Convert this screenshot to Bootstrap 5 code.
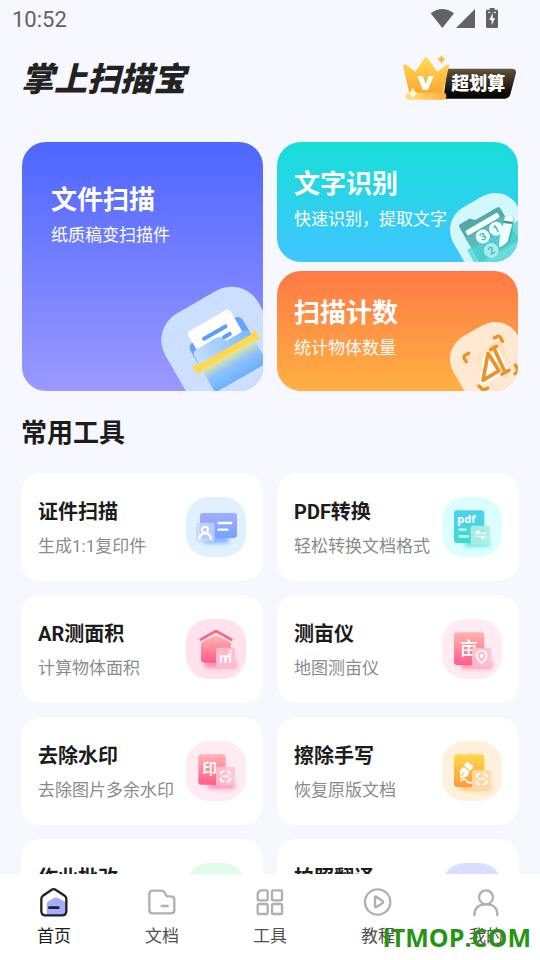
<!DOCTYPE html>
<html lang="zh-CN">
<head>
<meta charset="utf-8">
<meta name="viewport" content="width=device-width, initial-scale=1">
<title>掌上扫描宝</title>
<link href="https://cdn.jsdelivr.net/npm/bootstrap@5.3.0/dist/css/bootstrap.min.css" rel="stylesheet">
<style>
  body { font-family: Roboto, "Noto Sans CJK SC", sans-serif; background: #f7f7ff; color: #1c1c1c; }
  svg { display: block; flex: none; }
  .cjk { font-family: "Noto Sans CJK SC", sans-serif; }
  .app-status { height: 36px; padding: 0 41px 0 12px; font-size: 22px; color: #626266; }
  .app-time { padding-top: 3px; }
  .app-head { height: 106px; padding: 0 23px 24px 21px; }
  .app-logo { font-size: 33px; line-height: 40px; font-weight: 900; font-style: italic; color: #222; }
  .app-scroll { overflow-y: auto; scrollbar-width: none; min-height: 0; padding: 0 21px 20px; }
  .app-scroll::-webkit-scrollbar { display: none; }
  .tile-grid { display: grid; grid-template-columns: 1fr 1fr; gap: 14px; }
  .hero-grid { padding: 0 1px; }
  .hero { border-radius: 24px; overflow: hidden; color: #fff; padding: 22px 17px; min-height: 120px; }
  .hero:hover { color: #fff; }
  .hero-tall { padding: 38px 29px; }
  .hero-blue { background: linear-gradient(#4d66ff, #9b99ff); }
  .hero-cyan { background: linear-gradient(#18ded8, #40c5ff); }
  .hero-orange { background: linear-gradient(#ff7a45, #ffb043); }
  .hero-gap { gap: 9px; }
  .hero-title, .sec-title { font-size: 26px; line-height: 40px; font-weight: 700; margin: 0; }
  .hero-sub { font-size: 17px; line-height: 30px; }
  .hero-art { position: absolute; right: 0; bottom: 0; }
  .sec-title { margin: 22px 0 20px; }
  .tool { background: #fff; border-radius: 20px; padding: 22px 17px; color: #1c1c1c; min-height: 108px; }
  .tool-text { min-height: 64px; padding-top: 2px; }
  .tool-title { font-size: 20px; line-height: 30px; font-weight: 700; margin: 0 0 7px; }
  .tool-sub { font-size: 17px; line-height: 25px; color: #8b8b8b; }
  .app-tabs { background: #fff; height: 86px; padding-top: 13px; }
  .app-tab { font-size: 17px; line-height: 26px; color: #505050; gap: 5px; }
  .app-tab.active { color: #1c1c1c; }
  .site-stamp { position: absolute; right: 9px; bottom: 4px; font: 700 25px/38px "Open Sans", sans-serif; color: #279414; pointer-events: none; }
</style>
</head>
<body class="vh-100 d-flex flex-column overflow-hidden position-relative">
<header class="flex-shrink-0">
  <div class="app-status d-flex align-items-center justify-content-between">
    <span class="app-time">10:52</span>
    <svg width="69" height="22" viewBox="120 18 207 66" fill="#626266" aria-hidden="true">
      <path d="M122 37Q157 11 192 37L157 81Z"/><path d="M255 24V81H198Z"/>
      <path d="M299 21h15v5h6q4 0 4 4v47q0 4-4 4h-28q-4 0-4-4V30q0-4 4-4h7Z"/>
      <path d="M308 35 298 57h7v16l10-22h-7Z" fill="#fff"/><path d="M294 34h7M311 34h7" stroke="#fff" stroke-width="3"/>
    </svg>
  </div>
  <div class="app-head d-flex align-items-center justify-content-between">
    <h1 class="app-logo cjk m-0">掌上扫描宝</h1>
    <a href="#vip" aria-label="超划算">
      <svg width="115" height="48" viewBox="36 160 345 144">
        <defs>
          <linearGradient id="gk" x1="0" y1="0" x2="0" y2="1"><stop stop-color="#62543a"/><stop offset=".85" stop-color="#080704"/></linearGradient>
          <linearGradient id="gc" x1="0" y1="0" x2="0" y2="1"><stop stop-color="#ffdc55"/><stop offset="1" stop-color="#ffa72f"/></linearGradient>
          <linearGradient id="gb"><stop stop-color="#ffe07a"/><stop offset=".5" stop-color="#ffc860"/><stop offset="1" stop-color="#ffad3b"/></linearGradient>
        </defs>
        <path d="M172 207H364Q382 207 377 224L361 284Q357 297 342 297H160Z" fill="url(#gk)"/>
        <path d="M42 195q5-2 10 2l24 19 27-40q5-7 10 0l29 40 28-20q10-4 7 4l-19 80H58L39 200q0-4 3-5Z" fill="url(#gc)"/>
        <rect x="47" y="279" width="122" height="21" rx="10" fill="url(#gb)"/>
        <path d="M82 229h16l9 24 9-24h15l-17 41h-16Z" fill="#fff"/>
        <path d="M154 165q3 11 13 14-10 3-13 13-3-10-13-13 10-3 13-14Z" fill="#ffb640"/>
        <path d="M68 263q4 14 16 18-12 4-16 17-4-13-16-17 12-4 16-18Z" fill="#fff7d8"/>
        <text class="cjk" x="184" y="271" font-size="54" font-weight="900" fill="#fff">超划算</text>
      </svg>
    </a>
  </div>
</header>

<main class="app-scroll flex-grow-1">
  <div class="tile-grid hero-grid">
    <a href="#scan" class="hero hero-tall hero-blue position-relative text-decoration-none">
      <svg class="hero-art" width="113" height="121" viewBox="0 0 339 363" aria-hidden="true">
        <defs>
          <linearGradient id="s1" x1="0" y1="0" x2="0" y2="1"><stop stop-color="#ffe271"/><stop offset=".12" stop-color="#dfe4a0"/><stop offset=".48" stop-color="#8dc2ff"/><stop offset="1" stop-color="#6bb0ff"/></linearGradient>
          <linearGradient id="s2"><stop stop-color="#c4e0ff"/><stop offset="1" stop-color="#7db8ff"/></linearGradient>
        </defs>
        <rect x="59" y="75" width="321" height="321" rx="92" transform="rotate(-30 219.500 235.500)" fill="#cddfff"/>
        <g transform="rotate(-30 225 245)">
          <rect x="137" y="172" width="182" height="74" rx="18" fill="#65a3ff"/>
          <rect x="154" y="138" width="146" height="108" rx="12" fill="#fff"/>
          <path d="M190 180h74M244 206h20" stroke="#5a9cff" stroke-width="12" stroke-linecap="round"/>
          <path d="M139 262v-50q0-16 16-16h68q9 0 14 8l8 15h60q14 0 14 14v29Z" fill="url(#s2)"/>
          <path d="M138 250h181v74q0 13-13 13H151q-13 0-13-13Z" fill="url(#s1)"/>
          <path d="M120 236h14v5h187v-5h14v25h-14v-5H134v5h-14Z" fill="#ffd94a" stroke="#ffd94a" stroke-width="3" stroke-linejoin="round"/>
        </g>
      </svg>
      <div class="position-relative text-nowrap"><h2 class="hero-title">文件扫描</h2><div class="hero-sub">纸质稿变扫描件</div></div>
    </a>
    <div class="d-flex flex-column hero-gap">
      <a href="#ocr" class="hero hero-cyan position-relative text-decoration-none">
        <svg class="hero-art" width="88" height="82" viewBox="0 0 264 246" aria-hidden="true">
          <rect x="72" y="51" width="222" height="222" rx="78" transform="rotate(-30 183 162)" fill="#d2f8fb"/>
          <g transform="rotate(-30 180 165)">
            <path d="M112 98q0-6 6-6h34l12 12h76q7 0 7 7v50H112Z" fill="#55a9a8"/>
            <rect x="121" y="117" width="112" height="17" rx="5" fill="#f4ffff"/>
            <path d="M112 137h136v76q0 10-10 10H122q-10 0-10-10Z" fill="#5db9b8"/>
            <path d="M98 170h180v95H98Z" fill="#3ecfd0" opacity=".72"/>
            <path d="M98 180h180M98 190h180M98 200h180M98 210h180M98 220h180M98 230h180M108 170v70M118 170v70M128 170v70M138 170v70M148 170v70M158 170v70M168 170v70M178 170v70M188 170v70M198 170v70M208 170v70M218 170v70M228 170v70M238 170v70" stroke="#7be5e3" stroke-width="2" opacity=".5"/>
            <circle cx="159" cy="158" r="21" fill="#eaffff"/><circle cx="205" cy="158" r="21" fill="#eaffff"/><circle cx="160" cy="207" r="22" fill="#a6efee"/>
            <g font-size="32" font-weight="700" text-anchor="middle" fill="#55b5b5"><text x="159" y="169">3</text><text x="205" y="169">1</text><text x="160" y="218">2</text></g>
          </g>
          <path d="M226 119q2-14 16-12 12 2 10 16l-13 62-25 20q-6 1-6-6l4-20Z" fill="#2e8f8e" opacity=".55"/>
          <path d="M223 116q2-11 15-10 13 1 12 14l-2 8-26-4ZM221 129l26 4-14 53-19 15q-6 2-7-4l2-24Z" fill="#effffe"/>
          <path d="m222 122 27 4-1 5-28-4Z" fill="#438e8c"/>
        </svg>
        <div class="position-relative text-nowrap"><h2 class="hero-title">文字识别</h2><div class="hero-sub">快速识别，提取文字</div></div>
      </a>
      <a href="#count" class="hero hero-orange position-relative text-decoration-none">
        <svg class="hero-art" width="88" height="81" viewBox="0 0 264 243" fill="none" aria-hidden="true">
          <defs><linearGradient id="o1" x1="0" y1="0" x2="0" y2="1"><stop stop-color="#ffdcb8"/><stop offset="1" stop-color="#ffe9d2" stop-opacity="0"/></linearGradient></defs>
          <rect x="72" y="48" width="222" height="222" rx="78" transform="rotate(-30 183 159)" fill="#ffe9d2"/>
          <path d="M110 148 208 92l44 76-98 56Z" fill="url(#o1)"/>
          <path d="M109 155q-12-15-4-19l11-6M193 84l9-5q8-4 15 15M264 186l-9 5M256 165q10 15 4 21M147 228l12 12 14-5" stroke="#eb9324" stroke-width="10" stroke-linecap="round" stroke-linejoin="round"/>
          <path d="M174 134 159 213 211 182ZM193 114l31 71" stroke="#fff" stroke-width="22" stroke-linejoin="round"/>
          <path d="M174 130 159 211 207 182ZM182 119l17-10M192 115l33 72M216 192l21-11" stroke="#eb9324" stroke-width="11" stroke-linejoin="round" stroke-linecap="round"/>
          <path d="M176 152 171 193 192 179Z" fill="#fff"/>
        </svg>
        <div class="position-relative text-nowrap"><h2 class="hero-title">扫描计数</h2><div class="hero-sub">统计物体数量</div></div>
      </a>
    </div>
  </div>

  <h2 class="sec-title">常用工具</h2>

  <svg width="0" height="0" class="position-absolute" aria-hidden="true">
    <defs>
      <linearGradient id="t1" x1="0" y1="0" x2="0" y2="1"><stop stop-color="#a2adff"/><stop offset="1" stop-color="#75a3ff"/></linearGradient>
      <linearGradient id="t2" x1="0" y1="0" x2="0" y2="1"><stop stop-color="#4fd0f2"/><stop offset="1" stop-color="#3ddcc9"/></linearGradient>
      <linearGradient id="t3" x1="0" y1="0" x2="0" y2="1"><stop stop-color="#ffb4b0"/><stop offset="1" stop-color="#ff5c8a"/></linearGradient>
      <linearGradient id="t4" x1="0" y1="0" x2="0" y2="1"><stop stop-color="#ffd84e"/><stop offset="1" stop-color="#ff9a3a"/></linearGradient>
      <filter id="soft" x="-50%" y="-100%" width="200%" height="300%"><feGaussianBlur stdDeviation="6"/></filter>
    </defs>
  </svg>

  <div class="tile-grid">
    <a href="#id" class="tool d-flex justify-content-between align-items-center text-decoration-none">
      <div class="tool-text text-nowrap"><h3 class="tool-title">证件扫描</h3><div class="tool-sub">生成1:1复印件</div></div>
      <svg width="60" height="60" viewBox="48 51 180 180" aria-hidden="true">
        <rect x="48" y="51" width="180" height="180" rx="68" fill="#e0f0ff"/>
        <rect x="100" y="160" width="76" height="30" fill="#6fa5ff" opacity=".8" filter="url(#soft)"/>
        <rect x="90" y="99" width="111" height="75" rx="9" fill="url(#t1)"/>
        <rect x="78" y="128" width="56" height="57" rx="7" fill="#c5d5ff" opacity=".8"/>
        <g fill="none" stroke="#fff" stroke-linecap="round"><path d="M146 129h38M146 149h26" stroke-width="7"/><circle cx="105" cy="149" r="9" stroke-width="6"/><path d="M88 176q1-16 17-16t18 16" stroke-width="7"/></g>
      </svg>
    </a>
    <a href="#pdf" class="tool d-flex justify-content-between align-items-center text-decoration-none">
      <div class="tool-text text-nowrap"><h3 class="tool-title">PDF转换</h3><div class="tool-sub">轻松转换文档格式</div></div>
      <svg width="60" height="60" viewBox="36 51 180 180" aria-hidden="true">
        <rect x="36" y="51" width="180" height="180" rx="68" fill="#dcfeff"/>
        <rect x="104" y="180" width="74" height="20" fill="#3de0d0" opacity=".75" filter="url(#soft)"/>
        <rect x="72" y="91" width="91" height="98" rx="9" fill="url(#t2)"/>
        <text x="82" y="130" font-family="Noto Sans" font-weight="700" font-size="33" fill="#fff">pdf</text>
        <path d="M89 149h17M89 169h25" stroke="#b9f5f3" stroke-width="8" stroke-linecap="round"/>
        <rect x="122" y="137" width="58" height="57" rx="8" fill="#aeeee8" opacity=".92"/>
        <path d="M135 160h32M137 160l9-8v8M135 169h32M165 169l-9 9v-9" fill="#fff" stroke="#fff" stroke-width="4" stroke-linejoin="round"/>
      </svg>
    </a>
    <a href="#ar" class="tool d-flex justify-content-between align-items-center text-decoration-none">
      <div class="tool-text text-nowrap"><h3 class="tool-title">AR测面积</h3><div class="tool-sub">计算物体面积</div></div>
      <svg width="60" height="60" viewBox="48 27 180 180" aria-hidden="true">
        <rect x="48" y="27" width="180" height="180" rx="68" fill="#ffe2ee"/>
        <rect x="104" y="150" width="94" height="24" fill="#ff6b90" opacity=".7" filter="url(#soft)"/>
        <path d="M92 89 138 63 184 89" fill="none" stroke="#fa648b" stroke-width="8" stroke-linecap="round" stroke-linejoin="round"/>
        <path d="M93 104q0-6 5-9l34-17q6-3 12 0l34 17q5 3 5 9v44q0 10-10 10H103q-10 0-10-10Z" fill="url(#t3)"/>
        <rect x="138" y="113" width="57" height="60" rx="8" fill="#ffbccd" opacity=".93"/>
        <text x="147" y="159" font-family="Noto Sans" font-weight="700" font-size="40" fill="#fff">m</text><text x="174" y="136" font-family="Noto Sans" font-weight="700" font-size="22" fill="#fff">2</text>
      </svg>
    </a>
    <a href="#land" class="tool d-flex justify-content-between align-items-center text-decoration-none">
      <div class="tool-text text-nowrap"><h3 class="tool-title">测亩仪</h3><div class="tool-sub">地图测亩仪</div></div>
      <svg width="60" height="60" viewBox="36 27 180 180" aria-hidden="true">
        <rect x="36" y="27" width="180" height="180" rx="68" fill="#ffebf3"/>
        <rect x="94" y="154" width="92" height="22" fill="#ff6b90" opacity=".7" filter="url(#soft)"/>
        <rect x="72" y="67" width="91" height="98" rx="9" fill="url(#t3)"/>
        <text class="cjk" x="89" y="136" font-weight="500" font-size="54" fill="#fff">亩</text>
        <rect x="126" y="113" width="58" height="57" rx="8" fill="#ffc2d1" opacity=".93"/>
        <path d="M155 159q-15-12-15-22a15 15 0 0 1 30 0q0 10-15 22Z" fill="none" stroke="#fff" stroke-width="5" stroke-linejoin="round"/><circle cx="155" cy="138" r="6" fill="#fff"/>
      </svg>
    </a>
    <a href="#watermark" class="tool d-flex justify-content-between align-items-center text-decoration-none">
      <div class="tool-text text-nowrap"><h3 class="tool-title">去除水印</h3><div class="tool-sub">去除图片多余水印</div></div>
      <svg width="60" height="60" viewBox="48 393 180 180" aria-hidden="true">
        <rect x="48" y="393" width="180" height="180" rx="68" fill="#ffebf3"/>
        <rect x="114" y="514" width="80" height="22" fill="#ff6b90" opacity=".7" filter="url(#soft)"/>
        <rect x="85" y="433" width="82" height="91" rx="9" fill="url(#t3)"/>
        <text class="cjk" x="97" y="492" font-weight="700" font-size="44" fill="#fff">印</text>
        <rect x="138" y="470" width="57" height="57" rx="8" fill="#ffc2d1" opacity=".9"/>
        <path d="M152 493q0-9 9-9M172 484q9 0 9 9M152 505q0 10 9 10M172 515q9 0 9-10M158 499h17" fill="none" stroke="#fff" stroke-width="5" stroke-linecap="round"/>
      </svg>
    </a>
    <a href="#erase" class="tool d-flex justify-content-between align-items-center text-decoration-none">
      <div class="tool-text text-nowrap"><h3 class="tool-title">擦除手写</h3><div class="tool-sub">恢复原版文档</div></div>
      <svg width="60" height="60" viewBox="36 393 180 180" aria-hidden="true">
        <rect x="36" y="393" width="180" height="180" rx="68" fill="#fff1db"/>
        <rect x="94" y="520" width="88" height="22" fill="#ffb04d" opacity=".7" filter="url(#soft)"/>
        <rect x="72" y="433" width="91" height="98" rx="9" fill="url(#t4)"/>
        <path d="m107 458 6-2 16 12-1 6-7 8-19-16ZM101 470l17 14-4 14-22 8-2-4 14-14-2-2-12 13 1-20Z" fill="#fff"/>
        <path d="M93 512q12-9 16 0t24 5" fill="none" stroke="#fff" stroke-width="5" stroke-linecap="round"/>
        <rect x="126" y="480" width="58" height="57" rx="8" fill="#ffd9ad" opacity=".93"/>
        <path d="M140 501q0-9 9-9M161 492q9 0 9 9M140 513q0 10 9 10M161 523q9 0 9-10M146 507h17" fill="none" stroke="#fff" stroke-width="5" stroke-linecap="round"/>
      </svg>
    </a>
    <a href="#homework" class="tool d-flex justify-content-between align-items-center text-decoration-none">
      <div class="tool-text text-nowrap"><h3 class="tool-title">作业批改</h3></div>
      <svg width="60" height="60" viewBox="0 0 180 180" aria-hidden="true"><rect width="180" height="180" rx="68" fill="#dffde9"/></svg>
    </a>
    <a href="#translate" class="tool d-flex justify-content-between align-items-center text-decoration-none">
      <div class="tool-text text-nowrap"><h3 class="tool-title">拍照翻译</h3></div>
      <svg width="60" height="60" viewBox="0 0 180 180" aria-hidden="true"><rect width="180" height="180" rx="68" fill="#d9deff"/></svg>
    </a>
  </div>
</main>

<nav class="app-tabs d-flex flex-shrink-0" aria-label="主导航">
  <a href="#home" class="app-tab active d-flex flex-column align-items-center text-decoration-none w-100" aria-current="page">
    <svg width="31" height="31" viewBox="116 202 93 93" fill="none" aria-hidden="true">
      <path d="M139 287v-33q0-6 5-9l17-10q6-3 12 0l18 10q5 3 5 9v33Z" fill="#a5adff"/>
      <path d="M123 238q0-6 5-10l25-17q7-5 14 0l26 17q5 4 5 10v36q0 13-13 13h-49q-13 0-13-13Z" stroke="#222226" stroke-width="7"/>
      <path d="M147 264h27" stroke="#222226" stroke-width="8" stroke-linecap="round"/>
    </svg>首页</a>
  <a href="#docs" class="app-tab d-flex flex-column align-items-center text-decoration-none w-100">
    <svg width="31" height="31" viewBox="440 202 93 93" fill="none" stroke="#b0b0b0" stroke-width="7" stroke-linejoin="round" stroke-linecap="round" aria-hidden="true">
      <path d="M447 223q0-10 10-10h26q5 0 9 5l8 12h12q10 0 10 10v31q0 10-10 10h-55q-10 0-10-10ZM484 259h18"/>
    </svg>文档</a>
  <a href="#tools" class="app-tab d-flex flex-column align-items-center text-decoration-none w-100">
    <svg width="31" height="31" viewBox="764 202 93 93" fill="none" stroke="#b0b0b0" stroke-width="7" aria-hidden="true">
      <path d="M772 226q0-14 14-14h12q4 0 4 4v22q0 4-4 4h-22q-4 0-4-4Z"/><rect x="815" y="212" width="30" height="30" rx="4"/><rect x="772" y="253" width="30" height="30" rx="4"/><rect x="815" y="253" width="30" height="30" rx="4"/>
    </svg>工具</a>
  <a href="#course" class="app-tab d-flex flex-column align-items-center text-decoration-none w-100">
    <svg width="31" height="31" viewBox="278 202 93 93" fill="none" stroke="#b0b0b0" stroke-width="7" stroke-linejoin="round" aria-hidden="true">
      <circle cx="322" cy="247" r="38"/><path d="M314 233q0-4 4-2l19 13q3 3 0 6l-19 12q-4 2-4-2Z"/>
    </svg>教程</a>
  <a href="#me" class="app-tab d-flex flex-column align-items-center text-decoration-none w-100">
    <svg width="31" height="31" viewBox="602 202 93 93" fill="none" stroke="#b0b0b0" stroke-width="7" stroke-linecap="round" aria-hidden="true">
      <circle cx="647" cy="233" r="21"/><path d="M612 287q0-33 35-33t34 33"/>
    </svg>我的</a>
</nav>
<div class="site-stamp">ITMOP.COM</div>
<script src="https://cdn.jsdelivr.net/npm/bootstrap@5.3.0/dist/js/bootstrap.bundle.min.js"></script>
</body>
</html>
